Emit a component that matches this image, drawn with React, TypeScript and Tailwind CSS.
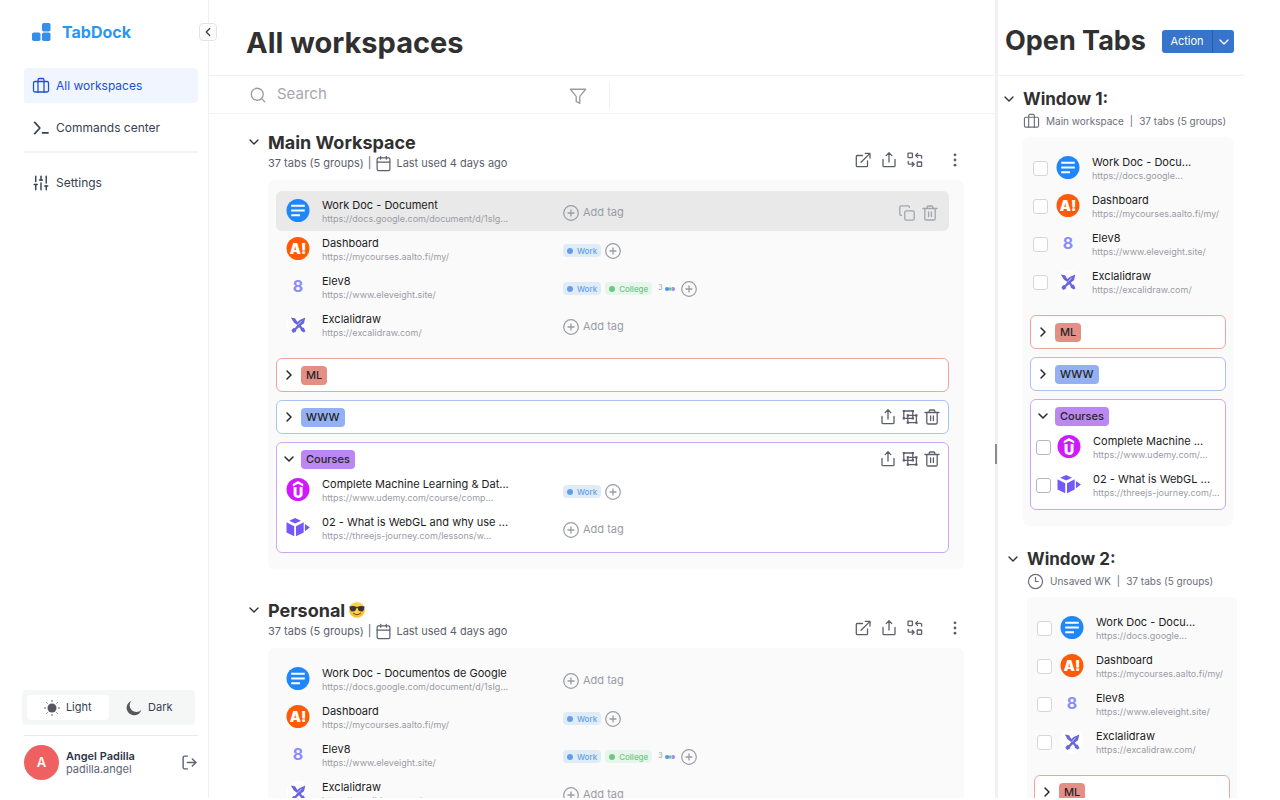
import { useState } from "react";
import type { ReactNode } from "react";
import { clsx } from "clsx";
import {
  Briefcase,
  Calendar,
  ChevronDown,
  ChevronLeft,
  ChevronRight,
  Clock3,
  LogOut,
  Search,
  SlidersVertical,
} from "lucide-react";

type Tag = "work" | "college";
type SiteIcon = "docs" | "aalto" | "elev8" | "excalidraw" | "udemy" | "three";

type Tab = {
  title: string;
  url: string;
  icon: SiteIcon;
  tags?: Tag[];
  more?: number;
  active?: boolean;
};

type Group = {
  name: string;
  color: "red" | "blue" | "purple";
  actions?: boolean;
  tabs?: Tab[];
};

const groupBorder = {
  red: "border-[#eda59d]",
  blue: "border-[#a9c3f6]",
  purple: "border-[#cfa6f5]",
};

const groupLabel = {
  red: "bg-[#e48f86]",
  blue: "bg-[#93b1f2]",
  purple: "bg-[#bb87f0]",
};

const commonTabs: Tab[] = [
  { title: "Dashboard", url: "https://mycourses.aalto.fi/my/", icon: "aalto", tags: ["work"] },
  {
    title: "Elev8",
    url: "https://www.eleveight.site/",
    icon: "elev8",
    tags: ["work", "college"],
    more: 3,
  },
  { title: "Exclalidraw", url: "https://excalidraw.com/", icon: "excalidraw" },
];

const docUrl = "https://docs.google.com/document/d/1sIg...";

const mainTabs: Tab[] = [
  { title: "Work Doc - Document", url: docUrl, icon: "docs", active: true },
  ...commonTabs,
];

const personalTabs: Tab[] = [
  { title: "Work Doc - Documentos de Google", url: docUrl, icon: "docs" },
  ...commonTabs,
];

const windowTabs: Tab[] = [
  { title: "Work Doc - Docu...", url: "https://docs.google...", icon: "docs" },
  ...commonTabs,
];

const mainGroups: Group[] = [
  { name: "ML", color: "red" },
  { name: "WWW", color: "blue", actions: true },
  {
    name: "Courses",
    color: "purple",
    actions: true,
    tabs: [
      {
        title: "Complete Machine Learning & Dat...",
        url: "https://www.udemy.com/course/comp...",
        icon: "udemy",
        tags: ["work"],
      },
      {
        title: "02 - What is WebGL and why use ...",
        url: "https://threejs-journey.com/lessons/w...",
        icon: "three",
      },
    ],
  },
];

const windowGroups: Group[] = [
  { name: "ML", color: "red" },
  { name: "WWW", color: "blue" },
  {
    name: "Courses",
    color: "purple",
    tabs: [
      { title: "Complete Machine ...", url: "https://www.udemy.com/...", icon: "udemy" },
      { title: "02 - What is WebGL ...", url: "https://threejs-journey.com/...", icon: "three" },
    ],
  },
];

function Icon({ children, className = "size-4" }: { children: ReactNode; className?: string }) {
  return (
    <svg
      viewBox="0 0 16 16"
      className={clsx("shrink-0", className)}
      fill="none"
      stroke="currentColor"
      strokeWidth="1.3"
      strokeLinecap="round"
      strokeLinejoin="round"
      aria-hidden="true"
    >
      {children}
    </svg>
  );
}

const ShareIcon = () => (
  <Icon>
    <path d="M2 7.5v6.2c0 .6.4 1 1 1h10c.6 0 1-.4 1-1V7.5M8 10V.9M5.2 3.6 8 .8l2.8 2.8" />
  </Icon>
);

const OpenIcon = () => (
  <Icon>
    <path d="M7.5 3.5H2.2c-.5 0-.9.4-.9.9v9.4c0 .5.4.9.9.9h9.4c.5 0 .9-.4.9-.9V9M6 10.2 15 1.4M10.2 1.3H15V6" />
  </Icon>
);

const ReplaceIcon = () => (
  <Icon>
    <rect x="1" y="1.2" width="4.4" height="4.4" rx=".5" />
    <rect x="10.2" y="10" width="4.4" height="4.4" rx=".5" />
    <path d="M14.6 6.2V4.6c0-.8-.5-1.2-1.2-1.2H8.8M10.6 1.4l-2 2 2 2M1.2 9.4V11c0 .8.5 1.2 1.2 1.2H7M5.2 10.2l2 2-2 2" />
  </Icon>
);

const DotsIcon = () => (
  <Icon>
    <g fill="currentColor" stroke="none">
      <circle cx="8" cy="2.8" r="1.4" />
      <circle cx="8" cy="8" r="1.4" />
      <circle cx="8" cy="13.2" r="1.4" />
    </g>
  </Icon>
);

const CopyIcon = () => (
  <Icon>
    <rect x="5.8" y="5.8" width="9.4" height="9.4" rx="1.4" />
    <path d="M2.4 10.4c-.9 0-1.6-.5-1.6-1.4V2.2C.8 1.4 1.4.8 2.2.8H9c.9 0 1.4.7 1.4 1.6" />
  </Icon>
);

const TrashIcon = () => (
  <Icon>
    <path d="M1 3.5h14M2.8 3.5v10.2c0 .8.5 1.3 1.3 1.3h7.8c.8 0 1.3-.5 1.3-1.3V3.5M5.2 3.3V2c0-.6.4-1 1-1h3.6c.6 0 1 .4 1 1v1.3M6.6 7v4.5M9.4 7v4.5" />
  </Icon>
);

const UngroupIcon = () => (
  <Icon>
    <path d="M1.8 2h9v7.4h-9zM5.8 6.4h8.6v7.2H5.800z" strokeWidth="1.3" strokeLinejoin="miter" />
    <g fill="currentColor" stroke="none">
      <path d="M.7.9h2.200v2.200H.7zM9.700.9h2.200v2.200H9.700zM.7 8.300h2.200v2.200H.7zM9.700 8.300h2.200v2.200H9.700zM4.700 5.300h2.200v2.200H4.700zM13.300 5.300h2.200v2.200h-2.200zM4.700 12.500h2.200v2.200H4.700zM13.300 12.500h2.200v2.200h-2.200z" />
    </g>
  </Icon>
);

const PlusIcon = () => (
  <Icon>
    <circle cx="8" cy="8" r="7.3" strokeWidth="1.2" />
    <path d="M8 5v6M5 8h6" strokeWidth="1.3" />
  </Icon>
);

function Favicon({ icon }: { icon: SiteIcon }) {
  return (
    <svg viewBox="0 0 24 24" className="size-6 shrink-0" aria-hidden="true">
      {icon === "docs" && (
        <>
          <circle cx="12" cy="11.5" r="11.5" fill="#1f87fb" />
          <path d="M5.2 6.8h13.6M5.2 11.5h13.6M5.2 16.2h8.8" stroke="#fff" strokeWidth="2.1" />
        </>
      )}
      {icon === "aalto" && (
        <>
          <circle cx="12" cy="11.5" r="11.5" fill="#ff5a08" />
          <text x="12" y="16.500" textAnchor="middle" fontSize="14" fontWeight="900" fill="#fff">
            A!
          </text>
        </>
      )}
      {icon === "elev8" && (
        <text x="12" y="17" textAnchor="middle" fontSize="16" fontWeight="700" fill="#8b8cf8">
          8
        </text>
      )}
      {icon === "excalidraw" && (
        <>
          <circle cx="12" cy="11.5" r="11.5" fill="#fff" />
          <path
            d="M4.8 4.500 9 5.300l2.400 3.800 2.300-2.200L19.300 4.600 18 10.200l-3.100 2.300 1.300 2 1.600.300 1.700 3.400-1.700 1.300-3-1.700-.200-1.800-1.600-1.700-2.700 2.400-.500 2-2.700 1.200-1.700-2.200 1.600-2.500 2-.200 2.300-2.900-3.500-2.500z"
            fill="#6965db"
          />
          <path d="m11.800 11.800 3.800-4" stroke="#fff" strokeWidth=".7" />
        </>
      )}
      {icon === "udemy" && (
        <>
          <circle cx="12" cy="11.5" r="11.5" fill="#cf1bfa" />
          <path d="m6.800 6 5.200-3 5.200 3v2.600L12 5.700 6.800 8.600z" fill="#fff" />
          <text x="12" y="19.500" textAnchor="middle" fontSize="14" fontWeight="900" fill="#fff">
            U
          </text>
        </>
      )}
      {icon === "three" && (
        <path
          d="m3.200 4.700 5.900-2.600L15 4.700 9.100 7.600zM.5 6.300l7.700 3.900v10L.5 16.600zM17.700 6.300 10 10.200v10l7.700-3.600zM18.900 8l5 3.600-5 3.600z"
          fill="#7458f8"
        />
      )}
    </svg>
  );
}

function TagPill({ tag }: { tag: Tag }) {
  return (
    <span
      className={clsx(
        "flex h-[13px] items-center gap-1 rounded-sm px-1 text-[8px] font-medium",
        tag === "work" ? "bg-[#dfecf6] text-[#659ee8]" : "bg-[#e6f6ea] text-[#6fc787]",
      )}
    >
      <span className="size-1.5 rounded-full bg-current" />
      {tag === "work" ? "Work" : "College"}
    </span>
  );
}

function TabTags({ tab }: { tab: Tab }) {
  if (!tab.tags) {
    return (
      <button type="button" className="flex items-center gap-1 text-[11px] text-[#9a9ca5]">
        <PlusIcon />
        Add tag
      </button>
    );
  }

  return (
    <div className="flex items-center gap-1 text-[#9a9ca5]">
      {tab.tags.map((tag) => (
        <TagPill key={tag} tag={tag} />
      ))}
      {tab.more ? (
        <span className="mx-0.5 flex items-center gap-0.5 text-[7px]">
          {tab.more}
          <svg viewBox="0 0 10 4" className="h-1 w-2.5" aria-hidden="true">
            <circle cx="8" cy="2" r="2" fill="#a77ff0" />
            <circle cx="5" cy="2" r="2" fill="#6fc787" stroke="#fafafa" strokeWidth=".5" />
            <circle cx="2" cy="2" r="2" fill="#5193ea" />
          </svg>
        </span>
      ) : null}
      <button type="button" aria-label="Add tag">
        <PlusIcon />
      </button>
    </div>
  );
}

function TabText({ tab }: { tab: Tab }) {
  return (
    <div className="whitespace-nowrap pt-0.5">
      <p className="text-[11px] leading-[14px] text-[#1c1c1c]">{tab.title}</p>
      <p className="text-[9px] leading-[14px] text-[#9a9ca5]">{tab.url}</p>
    </div>
  );
}

function WorkspaceTab({ tab, inGroup }: { tab: Tab; inGroup?: boolean }) {
  return (
    <li
      className={clsx(
        "flex items-center",
        inGroup ? "pl-[9px]" : "pl-2.5",
        tab.active ? "-my-px h-10 rounded-md bg-[#e9e9e9]" : "h-[38px]",
      )}
    >
      <Favicon icon={tab.icon} />
      <div className="ml-3 w-[241px]">
        <TabText tab={tab} />
      </div>
      <div className="pt-[3px]">
        <TabTags tab={tab} />
      </div>
      {tab.active ? (
        <div className="ml-auto flex gap-[7px] pr-[11px] pt-1 text-[#a3a5ae]">
          <button type="button" aria-label="Copy link">
            <CopyIcon />
          </button>
          <button type="button" aria-label="Delete tab">
            <TrashIcon />
          </button>
        </div>
      ) : null}
    </li>
  );
}

function WindowTab({ tab, inGroup }: { tab: Tab; inGroup?: boolean }) {
  return (
    <li>
      <label className={clsx("flex h-[38px] items-center", inGroup ? "pl-[5px]" : "pl-2.5")}>
        <input
          type="checkbox"
          className={clsx(
            "size-[15px] shrink-0 appearance-none rounded-[3px] border bg-white checked:bg-[#3873cc]",
            inGroup ? "border-[#b4b6bf]" : "border-[#d5d6db]",
          )}
        />
        <span className={inGroup ? "ml-1.5" : "ml-2"}>
          <Favicon icon={tab.icon} />
        </span>
        <div className="ml-3">
          <TabText tab={tab} />
        </div>
      </label>
    </li>
  );
}

function GroupCard({
  group,
  renderTab,
}: {
  group: Group;
  renderTab: (tab: Tab) => ReactNode;
}) {
  const [open, setOpen] = useState(Boolean(group.tabs));
  const Chevron = open ? ChevronDown : ChevronRight;

  return (
    <div className={clsx("overflow-hidden rounded-md border bg-white", groupBorder[group.color])}>
      <div className="flex h-8 items-center justify-between pl-1 pr-2">
        <button
          type="button"
          onClick={() => setOpen(!open)}
          className="flex items-center gap-1 text-[#262626]"
        >
          <Chevron className="size-4" strokeWidth={2.2} />
          <span
            className={clsx(
              "flex h-[19px] items-center rounded px-[5px] text-[11px] font-medium",
              groupLabel[group.color],
            )}
          >
            {group.name}
          </span>
        </button>
        {group.actions ? (
          <div className="flex gap-1.5 text-[#5c5f6b]">
            <button type="button" aria-label="Share group">
              <ShareIcon />
            </button>
            <button type="button" aria-label="Ungroup">
              <UngroupIcon />
            </button>
            <button type="button" aria-label="Delete group">
              <TrashIcon />
            </button>
          </div>
        ) : null}
      </div>
      {open && group.tabs ? <ul className="-mt-1 pb-[5px]">{group.tabs.map(renderTab)}</ul> : null}
    </div>
  );
}

function CoolEmoji() {
  return (
    <svg viewBox="0 0 16 16" className="size-4" role="img" aria-label="cool">
      <circle cx="8" cy="8" r="7.8" fill="#fbc02d" />
      <circle cx="8" cy="6.8" r="6.200" fill="#fdd54a" />
      <path d="M.4 4.600c2.500-.700 5-.700 7.600.300 2.600-1 5.100-1 7.600-.300l-.300 1.100c-.300 2.800-1.300 3.900-3.300 3.900-2.200 0-3-1.500-3.400-3.500-.200-.600-1-.600-1.200 0C7 8.100 6.200 9.600 4 9.600 2 9.600 1 8.500.7 5.700z" fill="#3a3432" />
      <path d="M4.600 11.200c2 1.600 4.800 1.600 6.800 0" fill="none" stroke="#8a4b14" strokeWidth="1.100" strokeLinecap="round" />
    </svg>
  );
}

function Workspace({
  name,
  emoji,
  tabs,
  groups,
}: {
  name: string;
  emoji?: boolean;
  tabs: Tab[];
  groups: Group[];
}) {
  return (
    <section className="flex">
      <button type="button" aria-label={`Toggle ${name}`} className="h-6 w-5 shrink-0 text-[#303030]">
        <ChevronDown className="-ml-0.5 size-4" strokeWidth={2} />
      </button>
      <div className="min-w-0 flex-1">
        <div className="flex items-end justify-between">
          <div>
            <h2 className="flex h-6 items-center gap-1 text-[18px] font-bold text-[#303030]">
              {name}
              {emoji ? <CoolEmoji /> : null}
            </h2>
            <p className="flex h-[18px] items-center gap-1 text-[11px] text-[#5c5f6b]">
              <span>37 tabs (5 groups)</span>
              <span>|</span>
              <Calendar className="size-[17px] shrink-0" strokeWidth={1.7} />
              <span>Last used 4 days ago</span>
            </p>
          </div>
          <div className="flex gap-2.5 pb-1 pr-px text-[#5c5f6b]">
            <button type="button" aria-label="Open workspace">
              <OpenIcon />
            </button>
            <button type="button" aria-label="Share workspace">
              <ShareIcon />
            </button>
            <button type="button" aria-label="Replace tabs">
              <ReplaceIcon />
            </button>
            <button type="button" aria-label="More" className="ml-3.5">
              <DotsIcon />
            </button>
          </div>
        </div>
        <div className="mt-2 rounded-md bg-[#fafafa] pb-4 pl-2 pr-[15px] pt-3">
          <ul>
            {tabs.map((tab) => (
              <WorkspaceTab key={tab.title} tab={tab} />
            ))}
          </ul>
          <div className="mt-3.5 flex flex-col gap-2">
            {groups.map((group) => (
              <GroupCard
                key={group.name}
                group={group}
                renderTab={(tab) => <WorkspaceTab key={tab.title} tab={tab} inGroup />}
              />
            ))}
          </div>
        </div>
      </div>
    </section>
  );
}

function BrowserWindow({
  name,
  icon,
  source,
  className,
}: {
  name: string;
  icon: ReactNode;
  source: string;
  className: string;
}) {
  return (
    <section className={clsx("flex", className)}>
      <button type="button" aria-label={`Toggle ${name}`} className="h-6 w-5 shrink-0 text-[#303030]">
        <ChevronDown className="-ml-0.5 size-4" strokeWidth={2} />
      </button>
      <div className="min-w-0 flex-1">
        <h2 className="h-6 text-[17px] font-bold leading-6 text-[#303030]">{name}:</h2>
        <p className="flex h-[18px] items-center gap-1.5 whitespace-nowrap pt-0.5 text-[10px] text-[#6b6e79]">
          {icon}
          <span>{source}</span>
          <span>|</span>
          <span>37 tabs (5 groups)</span>
        </p>
        <div className="mt-2 rounded-md bg-[#fafafa] pb-4 pt-3">
          <ul>
            {windowTabs.map((tab) => (
              <WindowTab key={tab.title} tab={tab} />
            ))}
          </ul>
          <div className="mt-3.5 flex flex-col gap-2 px-[7px]">
            {windowGroups.map((group) => (
              <GroupCard
                key={group.name}
                group={group}
                renderTab={(tab) => <WindowTab key={tab.title} tab={tab} inGroup />}
              />
            ))}
          </div>
        </div>
      </div>
    </section>
  );
}

function Sidebar() {
  const [theme, setTheme] = useState<"light" | "dark">("light");

  return (
    <aside className="relative flex w-[209px] shrink-0 flex-col border-r border-[#eff0f5] text-[#374151]">
      <div className="flex h-16 items-center gap-[11px] pl-8">
        <svg viewBox="0 0 19 19" className="size-[19px]" fill="#338fea" aria-hidden="true">
          <rect x="10" y="0" width="8.5" height="8.5" rx="1.8" />
          <rect x="0" y="9.5" width="8.5" height="8.5" rx="1.8" />
          <rect x="10" y="9.5" width="8.5" height="8.5" rx="1.8" />
        </svg>
        <span className="text-[16px] font-bold text-[#2a97ec]">TabDock</span>
      </div>
      <button
        type="button"
        aria-label="Collapse sidebar"
        className="absolute -right-[9px] top-[23px] flex size-[18px] items-center justify-center rounded border border-[#e1e3e8] bg-white"
      >
        <ChevronLeft className="size-3.5" strokeWidth={2.2} />
      </button>

      <nav className="mt-1 flex flex-col pl-6 pr-2.5 text-[12px]">
        <a href="#all" className="flex h-[35px] items-center gap-1.5 rounded bg-[#f0f5ff] pl-2 text-[#1d4ed8]">
          <Briefcase className="size-[18px]" strokeWidth={1.7} />
          All workspaces
        </a>
        <a href="#commands" className="mt-[7px] flex h-[35px] items-center gap-1.5 pl-2">
          <Icon className="size-[18px]">
            <path d="M2 2.5 7 8l-5 5.5M8.8 12.4h6" strokeWidth="1.5" strokeLinecap="butt" />
          </Icon>
          Commands center
        </a>
        <a
          href="#settings"
          className="mt-1.5 flex h-[50px] items-center gap-1.5 border-t-2 border-[#f4f4f6] pl-2 pt-3"
        >
          <SlidersVertical className="size-[18px]" strokeWidth={1.9} />
          Settings
        </a>
      </nav>

      <div className="mt-auto pb-[18px]">
        <div className="ml-[22px] mr-[13px] grid grid-cols-2 rounded bg-[#f5f7f7] p-[5px] text-[11px]">
          <button
            type="button"
            onClick={() => setTheme("light")}
            className={clsx(
              "flex h-[25px] items-center justify-center gap-1.5 rounded-sm",
              theme === "light" && "bg-white",
            )}
          >
            <svg viewBox="0 0 16 16" className="size-4 text-[#55585e]" fill="currentColor" aria-hidden="true">
              <circle cx="8" cy="8" r="4.5" />
              <path
                d="M8 .5v1M8 14.500v1M.5 8h1M14.500 8h1M2.700 2.700l.5.5M12.800 12.800l.5.5M2.700 13.300l.5-.5M12.800 3.200l.5-.5"
                stroke="currentColor"
                strokeLinecap="round"
              />
            </svg>
            Light
          </button>
          <button
            type="button"
            onClick={() => setTheme("dark")}
            className={clsx(
              "flex h-[25px] items-center justify-center gap-1.5 rounded-sm",
              theme === "dark" && "bg-white",
            )}
          >
            <svg viewBox="0 0 16 16" className="size-4 text-[#55585e]" fill="currentColor" aria-hidden="true">
              <path d="M5.5.8A7.5 7.5 0 1 0 15.300 10 6.600 6.600 0 0 1 5.500.8z" />
            </svg>
            Dark
          </button>
        </div>
        <div className="ml-6 mr-2.5 mt-[10px] flex items-center border-t border-[#e9eaec] pt-[9px]">
          <div className="flex size-[35px] items-center justify-center rounded-full bg-[#ef6060] text-[13px] font-semibold text-white">
            A
          </div>
          <div className="ml-[7px] text-[11px] leading-[13px]">
            <p className="font-semibold text-[#2d3748]">Angel Padilla</p>
            <p className="text-[#5a6474]">padilla.angel</p>
          </div>
          <button type="button" aria-label="Log out" className="ml-auto text-[#5a6474]">
            <LogOut className="size-[17px]" strokeWidth={2} />
          </button>
        </div>
      </div>
    </aside>
  );
}

export default function App() {
  return (
    <div className="flex h-screen overflow-hidden border-b-2 border-white bg-white pr-9 font-['Inter',sans-serif]">
      <Sidebar />

      <main className="flex min-w-0 flex-1 flex-col overflow-hidden">
        <header className="flex h-[76px] shrink-0 items-center border-b border-[#f0f1f5] pl-[37px] pt-2.5">
          <h1 className="text-[29px] font-bold text-[#303030]">All workspaces</h1>
        </header>
        <div className="flex h-[38px] shrink-0 items-center border-b border-[#f0f1f5] pl-10 text-[#9a9ca5]">
          <Search className="size-[18px]" strokeWidth={1.7} />
          <input
            type="search"
            aria-label="Search"
            placeholder="Search"
            className="ml-2.5 w-[292px] text-[15px] outline-none placeholder:text-[#a5a7ae]"
          />
          <button type="button" aria-label="Filter">
            <Icon className="mt-0.5 size-[18px]">
              <path d="M1.2 2h13.6L9.6 8.300v6.200l-3.200-1.700V8.300z" strokeWidth="1.2" />
            </Icon>
          </button>
          <div className="ml-[22px] h-[26px] w-px bg-[#eff0f3]" />
        </div>
        <div className="flex min-h-0 flex-1 flex-col gap-[29px] overflow-hidden pl-[39px] pr-[31px] pt-4">
          <Workspace name="Main Workspace" tabs={mainTabs} groups={mainGroups} />
          <Workspace name="Personal" emoji tabs={personalTabs} groups={mainGroups} />
        </div>
      </main>

      <div role="separator" aria-orientation="vertical" className="relative w-[3px] shrink-0 bg-[#f0f1f6]">
        <div className="absolute left-0 top-[444px] h-5 w-0.5 bg-[#8b8c90]" />
      </div>

      <aside className="flex w-[246px] shrink-0 flex-col overflow-hidden">
        <header className="flex h-[76px] shrink-0 items-center justify-between border-b border-[#f0f1f5] pl-[7px] pr-2.5 pt-2">
          <h1 className="text-[27px] font-bold text-[#303030]">Open Tabs</h1>
          <div className="flex h-[23px] overflow-hidden rounded-[3px] bg-[#3873cc] text-white">
            <button type="button" className="w-[50px] text-[11px]">
              Action
            </button>
            <button
              type="button"
              aria-label="More actions"
              className="flex w-[22px] items-center justify-center border-l border-[#2a5cab]"
            >
              <ChevronDown className="size-4" strokeWidth={2} />
            </button>
          </div>
        </header>
        <div className="flex min-h-0 flex-1 flex-col gap-[21px] overflow-hidden pt-[11px]">
          <BrowserWindow
            name="Window 1"
            source="Main workspace"
            icon={<Briefcase className="size-[17px] shrink-0" strokeWidth={1.6} />}
            className="pl-[5px] pr-[11px]"
          />
          <BrowserWindow
            name="Window 2"
            source="Unsaved WK"
            icon={<Clock3 className="size-[17px] shrink-0" strokeWidth={1.7} />}
            className="pl-[9px] pr-[7px]"
          />
        </div>
      </aside>
    </div>
  );
}
